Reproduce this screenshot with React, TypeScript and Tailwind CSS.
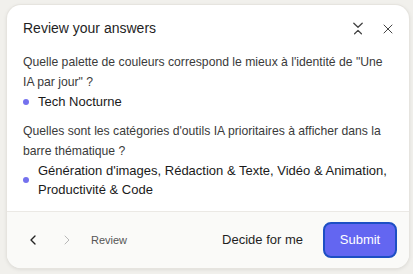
import { ChevronLeft, ChevronRight, X } from "lucide-react";

function CollapseIcon() {
  return (
    <svg width="10" height="13" viewBox="0 0 10 13" fill="none" stroke="currentColor" strokeWidth="1.3" strokeLinecap="round" strokeLinejoin="round">
      <path d="M0.8 1.2 5 5.3l4.2-4.1" />
      <path d="M1.6 11.8 5 8.4l3.4 3.4" />
    </svg>
  );
}

function Answer({ children }: { children: React.ReactNode }) {
  return (
    <div className="flex items-center gap-[9px]">
      <span className="h-[6px] w-[6px] shrink-0 rounded-full bg-[#7471ee]" />
      <span className="text-[13px] leading-[19px] text-[#1a1a1a]">{children}</span>
    </div>
  );
}

export default function App() {
  return (
    <div className="h-[274px] w-[413px] bg-[#f1f0ec] pl-[7px] pt-[5px] font-['Liberation_Sans',Arial,sans-serif]">
      <div className="flex h-[263px] w-[402px] flex-col overflow-hidden rounded-[14px] bg-white shadow-[0_1px_4px_rgba(0,0,0,0.12)] ring-1 ring-[#e6e4df]">
        <div className="flex h-[47px] shrink-0 items-center justify-between pl-4 pr-[13px]">
          <h2 className="text-[14px] text-[#1f1f1f]">Review your answers</h2>
          <div className="flex items-center gap-[17px] text-[#444]">
            <CollapseIcon />
            <X size={16} strokeWidth={1.5} />
          </div>
        </div>
        <div className="flex-1 pl-[16px] pr-4">
          <p className="text-[12.2px] leading-[20px] text-[#3a3a3a]">
            Quelle palette de couleurs correspond le mieux à l'identité de "Une IA par jour" ?
          </p>
          <Answer>Tech Nocturne</Answer>
          <p className="mt-[10px] text-[12.2px] leading-[20px] text-[#3a3a3a]">
            Quelles sont les catégories d'outils IA prioritaires à afficher dans la barre thématique ?
          </p>
          <Answer>Génération d'images, Rédaction &amp; Texte, Vidéo &amp; Animation, Productivité &amp; Code</Answer>
        </div>
        <div className="flex h-[57px] shrink-0 items-center border-t border-[#ebe9e5] bg-[#fafaf8] pl-[18px] pr-[12px]">
          <ChevronLeft size={16} strokeWidth={2} className="text-[#222]" />
          <ChevronRight size={16} strokeWidth={1.5} className="ml-[18px] text-[#b8b8b8]" />
          <span className="ml-[16px] text-[11px] text-[#555]">Review</span>
          <span className="ml-auto text-[13px] text-[#1f1f1f]">Decide for me</span>
          <button className="ml-[20px] h-[36px] w-[74px] rounded-[8px] border-2 border-[#1d4fc4] bg-[#6366f1] text-[13px] text-white">
            Submit
          </button>
        </div>
      </div>
    </div>
  );
}
